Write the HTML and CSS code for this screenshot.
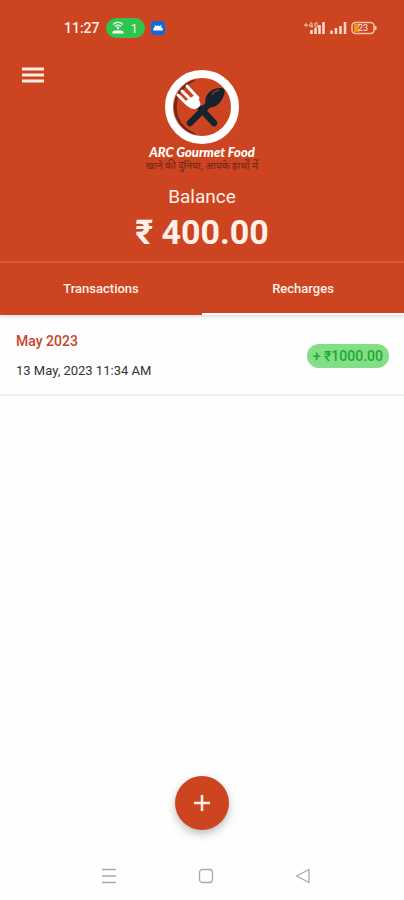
FILE: index.html
```html
<!DOCTYPE html>
<html lang="en">
<head>
<meta charset="utf-8">
<meta name="viewport" content="width=device-width, initial-scale=1">
<title>ARC Gourmet Food</title>
<link rel="stylesheet" href="styles.css">
</head>
<body>
<header class="hero">
  <div class="status">
    <div class="status-group">
      <span class="clock">11:27</span>
      <span class="hotspot">
        <svg width="12" height="14" viewBox="0 0 12 14" aria-hidden="true"><path d="M1 3.500Q6-1 11 3.500M3 5.500Q6 3 9 5.500" fill="none" stroke="#dff8e2" stroke-width="1.500"/><circle cx="6" cy="7" r="1.200" fill="#fff"/><path d="M.5 12.500V11Q1 9.500 3 9.500H9Q11 9.500 11.500 11V12.500Z" fill="#fff"/></svg>
        <span>1</span>
      </span>
      <svg width="14" height="14" viewBox="0 0 14 14" aria-hidden="true"><rect width="14" height="14" rx="3" fill="#1268dc"/><path d="M2.500 9Q3 5 7 5T11.500 9ZM4 4L5 6M10 4L9 6" fill="#fff" stroke="#fff"/></svg>
    </div>
    <div class="status-group status-right">
      <svg width="22" height="14" viewBox="0 0 22 14" aria-hidden="true"><path d="M7.500 9V13M11.500 7V13M15.500 4V13M19.500 1V13" stroke="#ffe0d0" stroke-width="2.500"/><path d="M0 4H4M2 2V6M7.500 1L5 5H9M8 2V7M14 2H11V6H14V4H12.500" fill="none" stroke="#f6c4ae"/></svg>
      <svg width="17" height="14" viewBox="0 0 17 14" aria-hidden="true"><path d="M1.500 9.500V13M6 7V13M10.500 5V13M15 1V13" stroke="#ffd9c6" stroke-width="2.500"/></svg>
      <span class="battery">
        <svg width="26" height="14" viewBox="0 0 26 14" aria-hidden="true"><path d="M3 3H8V11H3Z" fill="#ef9412"/><rect x="1" y="1.500" width="22" height="11" rx="3.500" fill="none" stroke="#fcc3a6" stroke-width="1.500"/><path d="M24.500 5V9" stroke="#fcc3a6" stroke-width="2"/></svg>
        <span class="battery-level">23</span>
      </span>
    </div>
  </div>
  <div class="top">
    <button class="menu" aria-label="Menu"><svg width="22" height="16" viewBox="0 0 22 16" aria-hidden="true"><path d="M0 2H22M0 8H22M0 14H22" stroke="#ffeee4" stroke-width="3"/></svg></button>
    <div class="brand">
      <svg width="76" height="74" viewBox="0 1 76 74" aria-hidden="true">
        <circle cx="38" cy="38" r="33" fill="none" stroke="#fff" stroke-width="8"/>
        <path d="M31 11A28 28 0 0 0 31 65Q12 56 12 38T31 11Z" fill="#6b251b" stroke="#6b251b"/>
        <path d="M37 40L50 54" stroke="#17222f" stroke-width="6.500" stroke-linecap="round"/>
        <path d="M26 54L45 35" stroke="#17222f" stroke-width="6.500" stroke-linecap="round"/>
        <path d="M42 36C39 28 46 18 58 19C61 20 61 23 60 26C57 35 50 40 44 38Z" fill="#17222f"/>
        <path d="M48 26Q50 22 55 21" fill="none" stroke="#8a3928" stroke-width="1.500"/>
        <path d="M14 26L24 36M18 22L28 32M23 17L34 29" stroke="#fff" stroke-width="3" stroke-linecap="round"/>
        <path d="M20 33L31 26Q38 33 36 37Q32 42 26 39Z" fill="#fff"/>
      </svg>
      <strong class="brand-name">ARC Gourmet Food</strong>
      <span class="brand-tag" lang="hi">खाने की दुनिया, आपके हाथों में</span>
    </div>
  </div>
  <p class="balance-label">Balance</p>
  <p class="balance">₹ 400.00</p>
  <nav class="tabs">
    <button class="tab">Transactions</button>
    <button class="tab tab-active">Recharges</button>
  </nav>
</header>
<main class="list">
  <article class="entry">
    <div>
      <h2 class="month">May 2023</h2>
      <p class="date">13 May, 2023 11:34 AM</p>
    </div>
    <span class="amount">+ ₹1000.00</span>
  </article>
</main>
<footer class="bottom">
  <button class="add" aria-label="Add recharge"><svg width="18" height="18" viewBox="0 0 18 18" aria-hidden="true"><path d="M1 9H17M9 1V17" stroke="#fff0e8" stroke-width="2.500"/></svg></button>
  <div class="system-nav">
    <button aria-label="Recent apps"><svg width="16" height="16" viewBox="0 0 16 16" aria-hidden="true"><path d="M1 1.500H15M1 8H15M1 14.500H15" stroke="#aaa" stroke-width="1.300"/></svg></button>
    <button aria-label="Home"><svg width="16" height="16" viewBox="0 0 16 16" aria-hidden="true"><rect x="1.500" y="1.500" width="13" height="13" rx="3" fill="none" stroke="#aaa" stroke-width="1.300"/></svg></button>
    <button aria-label="Back"><svg width="16" height="16" viewBox="0 0 16 16" aria-hidden="true"><path d="M14 1.500V14.500L1.500 8Z" fill="none" stroke="#aaa" stroke-width="1.300" stroke-linejoin="round"/></svg></button>
  </div>
</footer>
</body>
</html>
```
FILE: styles.css
```css
* {
  box-sizing: border-box;
}

body {
  margin: 0;
  min-height: 100vh;
  display: flex;
  flex-direction: column;
  background: #fefefe;
  color: #333;
  font-family: Roboto, "Noto Sans", sans-serif;
}

h2,
p {
  margin: 0;
}

button {
  display: block;
  padding: 0;
  border: 0;
  background: none;
  color: inherit;
  font: inherit;
}

svg {
  display: block;
}

.hero {
  background: #cc4420;
  color: #fff0e8;
}

.status {
  display: flex;
  justify-content: space-between;
  padding: 16px 27px 0 64px;
}

.status-group {
  display: flex;
  align-items: center;
  gap: 6px;
  height: 24px;
}

.status-right {
  gap: 4px;
}

.clock {
  font-size: 14px;
  font-weight: 500;
}

.hotspot {
  display: flex;
  align-items: center;
  justify-content: center;
  gap: 6px;
  width: 39px;
  height: 20px;
  border-radius: 10px;
  background: #2fc54d;
  font-size: 13px;
}

.battery {
  position: relative;
}

.battery-level {
  position: absolute;
  inset: 0 2px 0 0;
  font-size: 9px;
  line-height: 14px;
  text-align: center;
}

.top {
  display: grid;
  grid-template-columns: 1fr auto 1fr;
  align-items: start;
  padding: 27px 22px 0;
}

.brand {
  display: flex;
  flex-direction: column;
  align-items: center;
  grid-column: 2;
  padding-top: 3px;
}

.brand-name {
  font-family: Lato, sans-serif;
  font-size: 13px;
  font-style: italic;
  font-weight: 900;
  line-height: 16px;
  color: #fff;
}

.brand-tag {
  font-size: 10px;
  font-weight: 500;
  line-height: 12px;
  color: #782a1c;
  white-space: nowrap;
}

.balance-label {
  padding-top: 13px;
  font-size: 19px;
  line-height: 24px;
  text-align: center;
}

.balance {
  padding-bottom: 6px;
  font-size: 34px;
  font-weight: 700;
  line-height: 46px;
  text-align: center;
}

.tabs {
  display: grid;
  grid-template-columns: 1fr 1fr;
  border-top: 2px solid #d65a3a;
  box-shadow: 0 2px 3px rgba(0, 0, 0, 0.12);
}

.tab {
  height: 52px;
  border-bottom: 2px solid transparent;
  font-size: 13px;
  font-weight: 500;
}

.tab-active {
  border-bottom-color: #fff;
}

.list {
  flex: 1;
}

.entry {
  display: flex;
  align-items: center;
  justify-content: space-between;
  padding: 16px 15px 13px 16px;
  border-bottom: 2px solid #eee;
}

.month {
  margin-bottom: 10px;
  font-size: 14px;
  font-weight: 500;
  line-height: 20px;
  color: #c8452a;
}

.date {
  font-size: 13px;
  line-height: 20px;
}

.amount {
  padding: 0 6px;
  border-radius: 12px;
  background: #83df87;
  color: #1faa31;
  font-size: 14px;
  font-weight: 500;
  line-height: 24px;
}

.bottom {
  display: flex;
  flex-direction: column;
  gap: 38px;
  padding-bottom: 16px;
}

.add {
  display: grid;
  place-items: center;
  align-self: center;
  width: 54px;
  height: 54px;
  border-radius: 50%;
  background: #cc4420;
  box-shadow: 0 4px 8px rgba(0, 0, 0, 0.25);
}

.system-nav {
  display: flex;
  justify-content: space-between;
  width: 54%;
  margin: 0 auto;
  padding-left: 8px;
}
```
